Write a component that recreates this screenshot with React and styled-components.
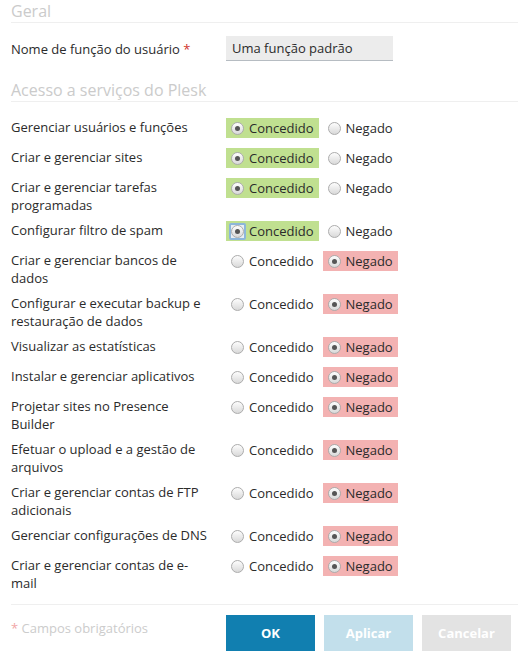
import React from 'react';
import styled, { createGlobalStyle } from 'styled-components';

const GlobalStyle = createGlobalStyle`
  body {
    margin: 0;
    background: #fff;
    font-family: "Open Sans", "Liberation Sans", sans-serif;
    font-size: 13px;
    color: #2b2b2b;
  }
`;

const Page = styled.div`
  padding: 0 0 0 11px;
  width: 507px;
`;

const SectionTitle = styled.h2`
  margin: ${p => p.$top || 0}px 0 0;
  font-size: 16px;
  font-weight: 400;
  line-height: 22px;
  color: #cbcbcb;
  border-bottom: 1px solid #efefef;
`;

const FieldRow = styled.div`
  display: flex;
  align-items: center;
  margin-top: 13px;
`;

const FieldLabel = styled.label`
  width: 215px;
  line-height: 18px;
`;

const Required = styled.span`
  color: #d0342c;
`;

const TextInput = styled.div`
  width: 161px;
  height: 24px;
  padding: 0 0 0 6px;
  background: #ececec;
  border-bottom: 1px solid #b6bcc2;
  display: flex;
  align-items: center;
  line-height: 18px;
`;

const List = styled.div`
  margin-top: 11px;
`;

const Row = styled.div`
  display: flex;
  align-items: flex-start;
  min-height: 30px;
  box-sizing: border-box;
  padding: 5px 0 2px;
`;

const RowLabel = styled.div`
  width: 200px;
  padding-right: 15px;
  line-height: 18px;
`;

const Options = styled.div`
  display: flex;
  gap: 4px;
`;

const Option = styled.label`
  display: flex;
  align-items: center;
  height: 20px;
  padding: 0 5px;
  background: ${p => (p.$checked ? (p.$tone === 'yes' ? '#c0e090' : '#f3b2b2') : 'transparent')};
  line-height: 18px;
  color: #2b2b2b;
`;

const Radio = styled.span`
  position: relative;
  box-sizing: border-box;
  width: 13px;
  height: 13px;
  border-radius: 50%;
  border: 1px solid #acacac;
  background: linear-gradient(#fdfdfd, #d9d9d9);
  flex: none;

  &::after {
    content: '';
    display: ${p => (p.$checked ? 'block' : 'none')};
    position: absolute;
    left: 3px;
    top: 3px;
    width: 5px;
    height: 5px;
    border-radius: 50%;
    background: #555;
  }
`;

const RadioSlot = styled.span`
  display: flex;
  align-items: center;
  justify-content: center;
  box-sizing: border-box;
  width: 17px;
  height: 17px;
  margin: 0 3px 0 -2px;
  border-radius: 2px;
  border: 2px solid ${p => (p.$focus ? '#8db6da' : 'transparent')};
  background: ${p => (p.$focus ? '#e8eef3' : 'transparent')};
  flex: none;
`;

const Footer = styled.div`
  display: flex;
  align-items: flex-start;
  margin-top: 10px;
  border-top: 1px solid #efefef;
  padding-top: 10px;
`;

const Note = styled.div`
  width: 215px;
  padding-top: 4px;
  color: #cccccc;
  line-height: 18px;
`;

const NoteStar = styled.span`
  color: #f1a6a6;
`;

const Buttons = styled.div`
  display: flex;
  gap: 9px;
`;

const Button = styled.button`
  width: 89px;
  height: 36px;
  border: 0;
  padding: 0;
  font-family: "Open Sans", "Liberation Sans", sans-serif;
  font-size: 13px;
  font-weight: 700;
  color: #fff;
  background: ${p => p.$bg};
`;

const rows = [
  { label: 'Gerenciar usuários e funções', on: true },
  { label: 'Criar e gerenciar sites', on: true },
  { label: 'Criar e gerenciar tarefas programadas', on: true },
  { label: 'Configurar filtro de spam', on: true, focus: true },
  { label: 'Criar e gerenciar bancos de dados', on: false },
  { label: 'Configurar e executar backup e restauração de dados', on: false },
  { label: 'Visualizar as estatísticas', on: false },
  { label: 'Instalar e gerenciar aplicativos', on: false },
  { label: 'Projetar sites no Presence Builder', on: false },
  { label: 'Efetuar o upload e a gestão de arquivos', on: false },
  { label: 'Criar e gerenciar contas de FTP adicionais', on: false },
  { label: 'Gerenciar configurações de DNS', on: false },
  { label: 'Criar e gerenciar contas de e-mail', on: false },
];

const PermissionRow = ({ label, on, focus }) => (
  <Row>
    <RowLabel>{label}</RowLabel>
    <Options>
      <Option $checked={on} $tone="yes">
        <RadioSlot $focus={focus}>
          <Radio $checked={on} />
        </RadioSlot>
        Concedido
      </Option>
      <Option $checked={!on} $tone="no">
        <RadioSlot>
          <Radio $checked={!on} />
        </RadioSlot>
        Negado
      </Option>
    </Options>
  </Row>
);

export default function App() {
  return (
    <Page>
      <GlobalStyle />
      <SectionTitle>Geral</SectionTitle>
      <FieldRow>
        <FieldLabel>
          Nome de função do usuário <Required>*</Required>
        </FieldLabel>
        <TextInput>Uma função padrão</TextInput>
      </FieldRow>
      <SectionTitle $top={18}>Acesso a serviços do Plesk</SectionTitle>
      <List>
        {rows.map(r => (
          <PermissionRow key={r.label} {...r} />
        ))}
      </List>
      <Footer>
        <Note>
          <NoteStar>*</NoteStar> Campos obrigatórios
        </Note>
        <Buttons>
          <Button $bg="#117fb0">OK</Button>
          <Button $bg="#c2dfeb">Aplicar</Button>
          <Button $bg="#e3e3e3">Cancelar</Button>
        </Buttons>
      </Footer>
    </Page>
  );
}
